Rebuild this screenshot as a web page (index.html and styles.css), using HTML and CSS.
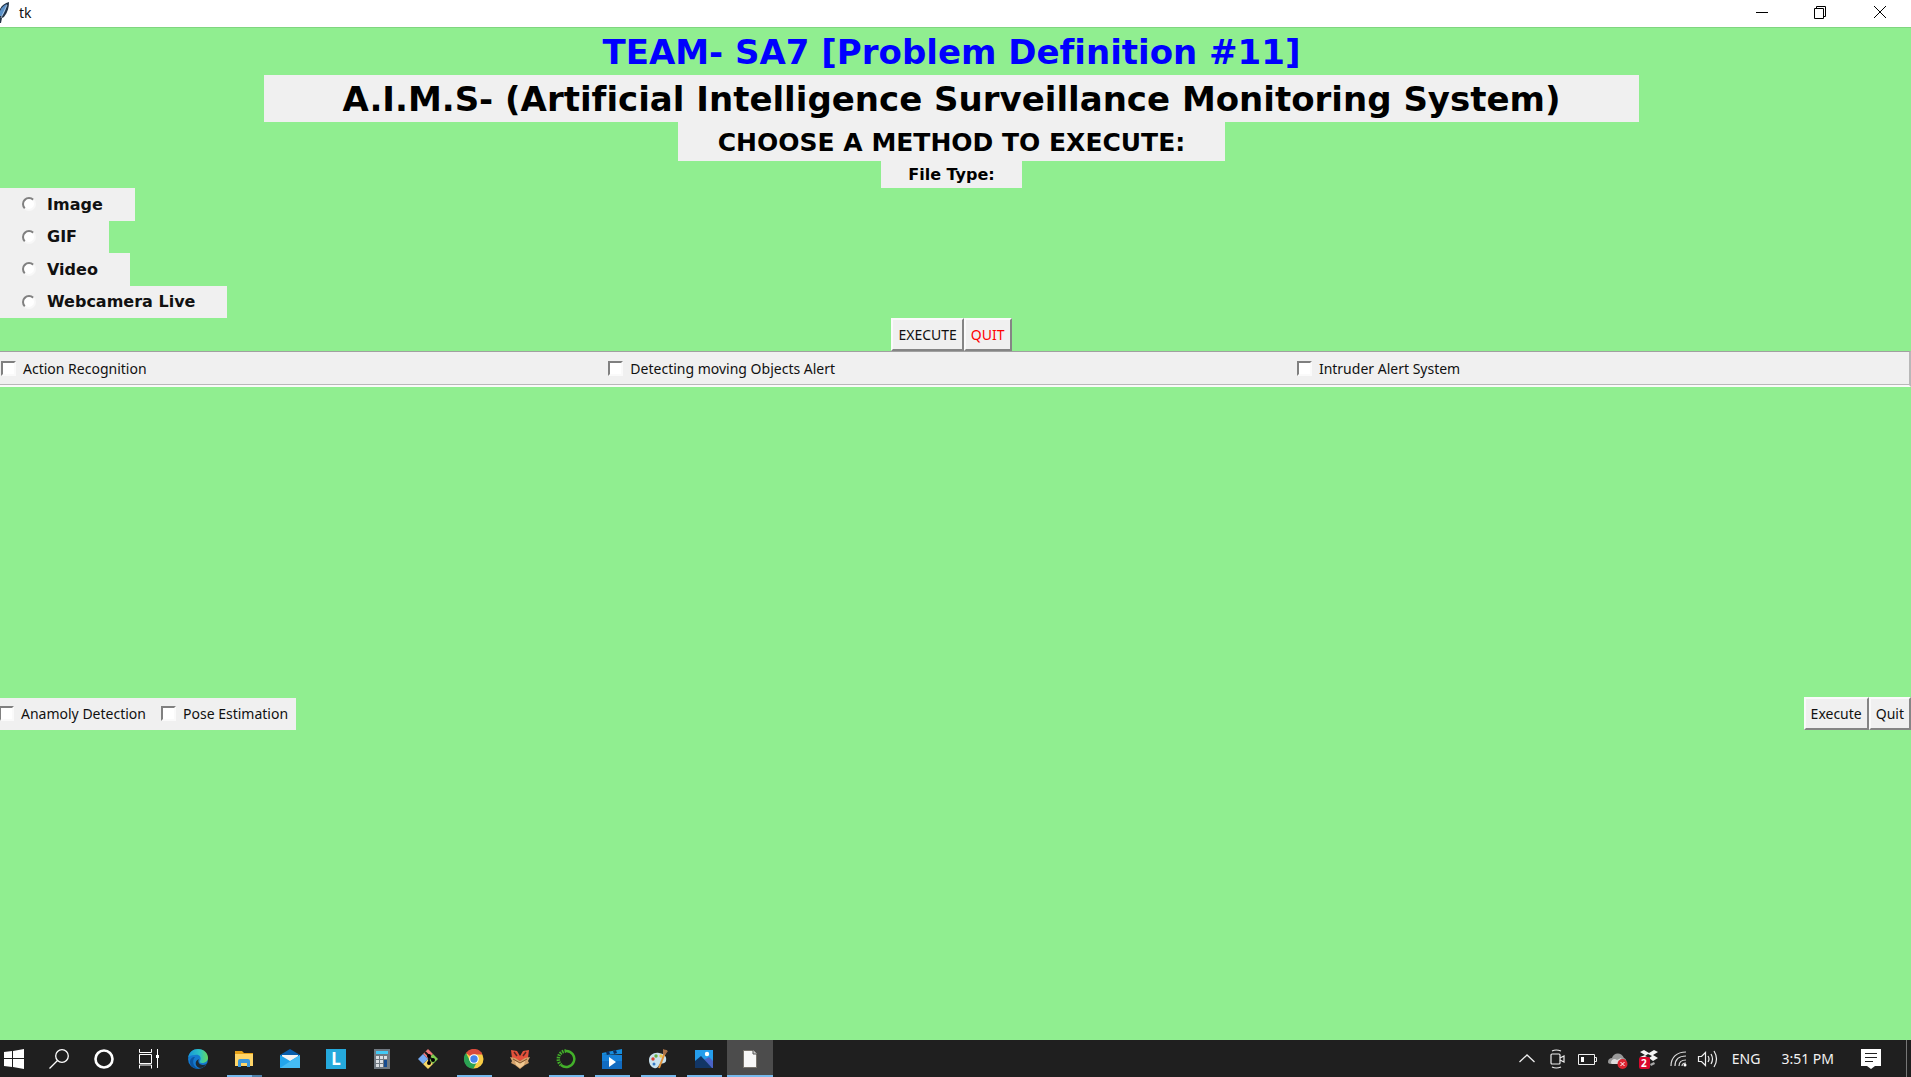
FILE: index.html
```
<!DOCTYPE html>
<html lang="en">
<head>
  <meta charset="UTF-8">
  <title>tk</title>
  <meta name="viewport" content="width=device-width, initial-scale=1.0">
  <link rel="stylesheet" href="styles.css">
</head>
<body>
  <header class="titlebar">
    <svg class="feather" width="10" height="22" viewBox="0 0 10 22"><path d="M0 7C2 3 5 1 9 0c0 5-1 10-5 15l-2 1-1 5H0Z" fill="#243447"/><path d="M0 9c2-4 4-6 7-7-1 5-2 8-5 12H0Z" fill="#5b91c8"/><path d="M7 3 1 16" stroke="#cde" stroke-width=".7"/></svg>
    <span class="window-name">tk</span>
    <div class="window-buttons">
      <button aria-label="Minimize"><svg width="14" height="14"><path d="M1 7.5h12" stroke="#000"/></svg></button>
      <button aria-label="Restore"><svg width="14" height="14" fill="none" stroke="#000"><path d="M1.500 3.500h9v10h-9zM3.500 3.500v-2h9v10h-2"/></svg></button>
      <button aria-label="Close"><svg width="14" height="14" stroke="#000"><path d="m1 1 12 12M13 1 1 13"/></svg></button>
    </div>
  </header>

  <main class="window">
    <div class="headings">
      <h1 class="team">TEAM- SA7 [Problem Definition #11]</h1>
      <h2 class="project">A.I.M.S- (Artificial Intelligence Surveillance Monitoring System)</h2>
      <h3 class="choose">CHOOSE A METHOD TO EXECUTE:</h3>
      <p class="file-type">File Type:</p>
    </div>

    <div class="radios">
      <label><input type="radio" name="type">Image</label>
      <label><input type="radio" name="type">GIF</label>
      <label><input type="radio" name="type">Video</label>
      <label><input type="radio" name="type">Webcamera Live</label>
    </div>

    <div class="buttons main-buttons">
      <button>EXECUTE</button>
      <button class="quit">QUIT</button>
    </div>

    <div class="options">
      <label><input type="checkbox">Action Recognition</label>
      <label><input type="checkbox">Detecting moving Objects Alert</label>
      <label><input type="checkbox">Intruder Alert System</label>
    </div>

    <div class="bottom">
      <div class="extra">
        <label><input type="checkbox">Anamoly Detection</label>
        <label><input type="checkbox">Pose Estimation</label>
      </div>
      <div class="buttons">
        <button>Execute</button>
        <button>Quit</button>
      </div>
    </div>
  </main>

  <footer class="taskbar">
    <button class="start" aria-label="Start"><svg width="20" height="20" fill="#fff"><path d="M0 3 8 2v7H0zM9 2l11-2v9H9zM0 10h8v8l-8-1zM9 10h11v10L9 18z"/></svg></button>
    <button class="tool" aria-label="Search"><svg width="20" height="20" fill="none" stroke="#fff" stroke-width="1.300"><circle cx="13" cy="7" r="6.300"/><path d="M8.500 11.500.5 19.500"/></svg></button>
    <button class="tool" aria-label="Cortana"><svg width="20" height="20" fill="none"><circle cx="10" cy="10" r="8.500" stroke="#fff" stroke-width="2.600"/></svg></button>
    <button class="tool view" aria-label="Task View"><svg width="20" height="20" fill="none" stroke="#fff"><path d="M.5 0v3.500h12V0M.5 19.500v-3.500h12v3.500M.5 5.500h12v9H.5zM18.500 0v19"/><path d="M17 6h3v3h-3z" fill="#fff" stroke="none"/></svg></button>
    <button class="app" aria-label="Edge"><svg width="20" height="20"><defs><linearGradient id="edge"><stop stop-color="#1694dc"/><stop offset=".6" stop-color="#2dc4c2"/><stop offset="1" stop-color="#67d85a"/></linearGradient></defs><circle cx="10" cy="10" r="10" fill="#1479d0"/><path d="M0 9C1 3 5 0 10 0c6 0 10 4 10 9 0 3-3 5-6 5-2 0-3-1-2-2 2-4-1-7-5-6-4 0-6 1-7 3Z" fill="url(#edge)"/><path d="M7 8c-4 5-1 10 4 12-6 0-9-3-9-7 0-3 2-5 5-5Z" fill="#0b55a2"/><path d="M11 10c-2 3 1 6 4 6 2 0 3-1 4-2-2 3-4 5-7 5-5-1-6-7-1-9Z" fill="#1e2a35"/></svg></button>
    <button class="app open stacked" aria-label="File Explorer"><svg width="20" height="20"><path d="M1 2h7l2 2h9v13H1z" fill="#e5a018"/><path d="M1 5h18v12H1z" fill="#ffd568"/><path d="M4 18v-6q0-2 2-2h8q2 0 2 2v6h-3v-4H7v4z" fill="#3c97dc"/></svg></button>
    <button class="app" aria-label="Mail"><svg width="20" height="20"><path d="M0 6 10 0l10 6v5H0z" fill="#075dab"/><path d="M2 6h16v7H2z" fill="#f3f3f3"/><path d="m0 6 10 6 10-6v13H0z" fill="#22a5ed"/><path d="m0 19 20-13v13z" fill="#45bbf4"/></svg></button>
    <button class="app" aria-label="L"><span class="l-icon">L</span></button>
    <button class="app" aria-label="Calculator"><svg width="16" height="20"><path d="M0 0h16v20H0z" fill="#707981"/><path d="M2 2h12v3H2z" fill="#42c9f5"/><path d="M2 7h3v3H2zM6 7h3v3H6zM10 7h3v3h-3zM2 11h3v3H2zM6 11h3v3H6zM2 15h3v3H2zM6 15h3v3H6z" fill="#dce0e4"/><path d="M10 11h3v7h-3z" fill="#164c91"/></svg></button>
    <button class="app" aria-label="Git"><svg width="20" height="20"><path d="m10 0 5 5-5 5-5-5z" fill="#ef7777"/><path d="m15 5 5 5-5 5-5-5z" fill="#81cc50"/><path d="m10 10 5 5-5 5-5-5z" fill="#f4d666"/><path d="m5 5 5 5-5 5-5-5z" fill="#76aaf2"/><path d="m7 3 4 4v8M11 8l4 3" fill="none" stroke="#1b1b1b" stroke-width="2"/><circle cx="11" cy="7" r="2"/><circle cx="11" cy="14" r="2"/><circle cx="15" cy="11" r="2"/></svg></button>
    <button class="app open" aria-label="Chrome"><svg width="20" height="20"><circle cx="10" cy="10" r="9.500" fill="#f8cc45"/><path d="M10 10 2 4a9.500 9.500 0 0 1 16.500 1.500H10z" fill="#d94b3c"/><path d="M2 4a9.500 9.500 0 0 0 7.500 15.500L13 13 6 12z" fill="#2ba253"/><circle cx="10" cy="10" r="4.800" fill="#fff"/><circle cx="10" cy="10" r="3.700" fill="#4583ec"/></svg></button>
    <button class="app" aria-label="Brigadier"><svg width="20" height="20"><path d="m1 1 6 1 3 5 3-5 6-1-1 8-8 3-8-3z" fill="#e4513b"/><path d="m4 3 3 4m9-4-3 4" stroke="#5b2820" stroke-width="1.500"/><path d="m0 8 5 1 5 3 5-3 5-1-2 4 1 2-4 2-5 4-5-4-4-2 1-2z" fill="#d3a06a"/><path d="m5 12 5 2 5-2-1 4-4 3-4-3z" fill="#f0c891"/><path d="m3 10 7 4 7-4" stroke="#80522d" fill="none"/></svg></button>
    <button class="app open" aria-label="Anaconda"><svg width="20" height="20" fill="none" stroke="#43b02a"><path d="M10 2a8 8 0 1 1-5 14" stroke-width="2.500"/><path d="M10 2a8 8 0 0 0-5 14" stroke-width="3.500" stroke-dasharray="1.500 1"/></svg></button>
    <button class="app open" aria-label="Movies"><svg width="20" height="20"><path d="m0 4 20-4v5L0 6z" fill="#168ddd"/><path d="m4 3 3-1 1 3-3 1zm7-1 3-1 1 3-3 1z" fill="#092e60"/><path d="M0 6h20v14H0z" fill="#1681d8"/><path d="M0 12h20v8H0z" fill="#126bc0"/><path d="m7 8 7 5-7 5z" fill="#fff"/></svg></button>
    <button class="app open" aria-label="Paint"><svg width="20" height="20"><path d="M1 11C1 6 6 3 11 4c6 1 8 4 7 8-1 3-4 2-6 3-2 2-2 5-6 4-3-1-5-4-5-8Z" fill="#c9e1ed"/><circle cx="5" cy="10" r="1.700" fill="#d64232"/><circle cx="8" cy="7" r="1.700" fill="#65af45"/><circle cx="13" cy="7" r="1.700" fill="#efc447"/><circle cx="6" cy="15" r="1.500" fill="#377ac5"/><path d="m18 1-7 18" stroke="#df913a" stroke-width="2"/><path d="m15 0 5 2-3 4-2-1z" fill="#a66e46"/></svg></button>
    <button class="app open" aria-label="Photos"><svg width="20" height="20"><path d="M1 1h18v18H1z" fill="#259deb"/><path d="m8 12 7-4 4 4v7H8z" fill="#4a62c5"/><path d="m1 12 6-5 11 12H1z" fill="#123666"/><circle cx="13" cy="5" r="2.200" fill="#fff"/></svg></button>
    <button class="app open active" aria-label="tk"><svg width="14" height="20"><path d="M.5 1.500h10l3 3v14H.5z" fill="#f7f7f7" stroke="#77736c"/><path d="M10 1v4h4" fill="#ccc" stroke="#555"/></svg></button>

    <div class="tray">
      <svg class="more" width="16" height="20" fill="none" stroke="#eee" stroke-width="1.300"><path d="m.5 13 7.500-7 7.500 7"/></svg>
      <svg width="16" height="20" fill="none" stroke="#eee" stroke-width="1.200"><rect x="1" y="5" width="9" height="10" rx="1"/><path d="m10 9 4-2v6l-4-2M2 2q4-2 9 0M2 18q4 2 9 0"/></svg>
      <svg width="20" height="20" fill="none" stroke="#eee"><path d="M1.500 5.500h16v10h-16zM18 8.500h1.500v4H18"/><path d="M4 8h3v5H4z" fill="#fff" stroke="none"/></svg>
      <svg width="20" height="20"><path d="M0 13c0-3 2-4 4-4 1-5 9-7 12 0 3 1 3 6 0 6H3c-2 0-3-1-3-2Z" fill="#999"/><path d="M3 14c0-4 4-5 6-3l4-2 3 6H4z" fill="#ddd"/><circle cx="14.500" cy="15" r="5" fill="#dc2430"/><path d="m12.500 13 4 4m0-4-4 4" stroke="#fff"/></svg>
      <svg width="20" height="20"><path d="m1 3 4-2 5 3 5-3 4 2-5 3 5 3-5 3-4-3-5 2-4-3 5-2z" fill="#f5f5f5"/><path d="m9 5 4 2-3 2-4-2z" fill="#222"/><path d="m11 15 4-2 1 2-4 2z" fill="#aaa"/><rect y="8" width="11" height="12" rx="2" fill="#d9082d"/><text x="2" y="18" class="badge-text">2</text></svg>
      <svg class="wifi" width="18" height="20" fill="none" stroke="#ddd" stroke-width="1.200"><path d="M1 17C1 8 7 3 16 3M5 17C5 10 9 7 16 7M9 17c0-4 3-6 7-6M12 17c0-2 2-3 4-3" /><circle cx="15" cy="16" r="1.500" fill="#fff" stroke="none"/></svg>
      <svg width="22" height="20" fill="none" stroke="#eee" stroke-width="1.200"><path d="M1.500 7.500h3l4-4v13l-4-4h-3zM11 7q2 3 0 6M14 5q3 5 0 10M17 2q5 8 0 16"/></svg>
      <span class="lang">ENG</span>
      <span class="clock">3:51 PM</span>
      <svg class="notice" width="20" height="20"><path d="M0 0h20v17h-6l-4 3-4-3H0z" fill="#fff"/><path d="M4 4.500h12M4 8.500h12M4 12.500h8" stroke="#222"/></svg>
      <span class="show-desktop"></span>
    </div>
  </footer>
</body>
</html>
```
FILE: styles.css
```
* { box-sizing: border-box; }
body {
  margin: 0;
  height: 100vh;
  display: flex;
  flex-direction: column;
  overflow: hidden;
  font-family: "Noto Sans", sans-serif;
  font-size: 14px;
  color: #111;
}
button, input { margin: 0; font: inherit; }
svg { display: block; flex: none; }
h1, h2, h3, p { margin: 0; }

.titlebar {
  display: flex;
  align-items: center;
  height: 27px;
  padding-bottom: 2px;
  background: white;
}
.window-name { margin-left: 9px; line-height: 24px; }
.window-buttons { display: flex; margin-left: auto; align-self: flex-start; }
.window-buttons button {
  display: flex;
  align-items: center;
  justify-content: center;
  width: 58px;
  height: 24px;
  padding: 0;
  border: none;
  background: white;
}
.window-buttons button:last-child { width: 62px; }

.window {
  flex: 1;
  display: flex;
  flex-direction: column;
  background: #90ee90;
  border-top: 1px solid #7fd67f;
}
.headings {
  display: flex;
  flex-direction: column;
  align-items: center;
  padding-right: 8px;
  font-family: "DejaVu Sans", sans-serif;
  font-weight: bold;
  font-variant-ligatures: none;
  color: black;
}
.team, .project { padding: 2px 78px 0; font-size: 34px; line-height: 45px; }
.team { color: blue; }
.project { background: #f0f0f0; }
.choose { padding: 2px 40px 0; font-size: 25px; line-height: 37px; background: #f0f0f0; }
.file-type { font-size: 16px; line-height: 27px; padding: 0 27px; background: #f0f0f0; }

.radios {
  display: grid;
  grid-template-rows: repeat(4, 1fr);
  justify-items: start;
  height: 130px;
  font-family: "DejaVu Sans", sans-serif;
  font-size: 16px;
  font-weight: bold;
}
.radios label {
  display: flex;
  align-items: center;
  gap: 11px;
  padding: 0 32px 0 22px;
  background: #f0f0f0;
}
.radios input {
  appearance: none;
  width: 14px;
  height: 14px;
  border: 2px solid;
  border-color: #808080 #f8f8f8 #f8f8f8 #808080;
  border-radius: 50%;
  background: white;
}

.buttons { display: flex; }
.main-buttons { justify-content: center; padding-right: 8px; }
.buttons button {
  height: 33px;
  padding: 0 5px;
  border: 2px solid;
  border-color: #fafafa #858585 #858585 #fafafa;
  background: #f0f0f0;
  color: #111;
}
.buttons .quit { color: red; }

.options {
  display: flex;
  gap: 12px;
  height: 36px;
  background: #f0f0f0;
  border: 2px solid;
  border-color: #a0a0a0 #b8b8b8 #fafafa #f0f0f0;
  border-left: none;
  border-top-width: 1px;
  box-shadow: inset 0 -1px #b8b8b8;
}
.options label { flex: 1 1 auto; padding-left: 1px; }
.options label, .extra label { display: flex; align-items: center; gap: 7px; }
.options input, .extra input {
  appearance: none;
  width: 15px;
  height: 15px;
  border: 2px solid;
  border-color: #808080 #fafafa #fafafa #808080;
  background: white;
}

.bottom {
  flex: 1;
  display: flex;
  align-items: center;
  justify-content: space-between;
}
.extra {
  display: flex;
  gap: 15px;
  height: 32px;
  padding-right: 8px;
  background: #f0f0f0;
}
.extra label:first-child input { width: 14px; border-left-width: 1px; }

.taskbar {
  display: flex;
  height: 37px;
  background: #1f1f1f;
  color: #f2f2f2;
}
.taskbar button {
  display: flex;
  align-items: center;
  justify-content: center;
  padding: 0;
  border: none;
  background: none;
}
.taskbar .start { width: 28px; margin-right: 8px; }
.taskbar .tool { width: 45px; }
.taskbar .view { margin-right: 4px; }
.taskbar .app { width: 46px; }
.taskbar .open { background: linear-gradient(#76b9ed, #76b9ed) bottom / 35px 2px no-repeat; }
.taskbar .stacked { background: linear-gradient(90deg, #76b9ed 70%, #4f80a8 70%) bottom / 35px 2px no-repeat; }
.taskbar .active { background: linear-gradient(#76b9ed, #76b9ed) bottom / 46px 2px no-repeat #4c4c4c; }
.l-icon {
  width: 20px;
  line-height: 20px;
  background: #25a9dc;
  color: white;
  font-size: 17px;
  font-weight: bold;
}

.tray {
  display: flex;
  align-items: center;
  gap: 11px;
  margin-left: auto;
}
.more { margin-right: 4px; }
.wifi { margin-right: -2px; }
.badge-text { font: bold 10px "Noto Sans", sans-serif; fill: white; }
.lang { margin-left: 2px; }
.clock { margin-left: 10px; }
.notice { margin: 0 14px 0 16px; }
.show-desktop { align-self: stretch; width: 5px; border-left: 1px solid #777; }
```
